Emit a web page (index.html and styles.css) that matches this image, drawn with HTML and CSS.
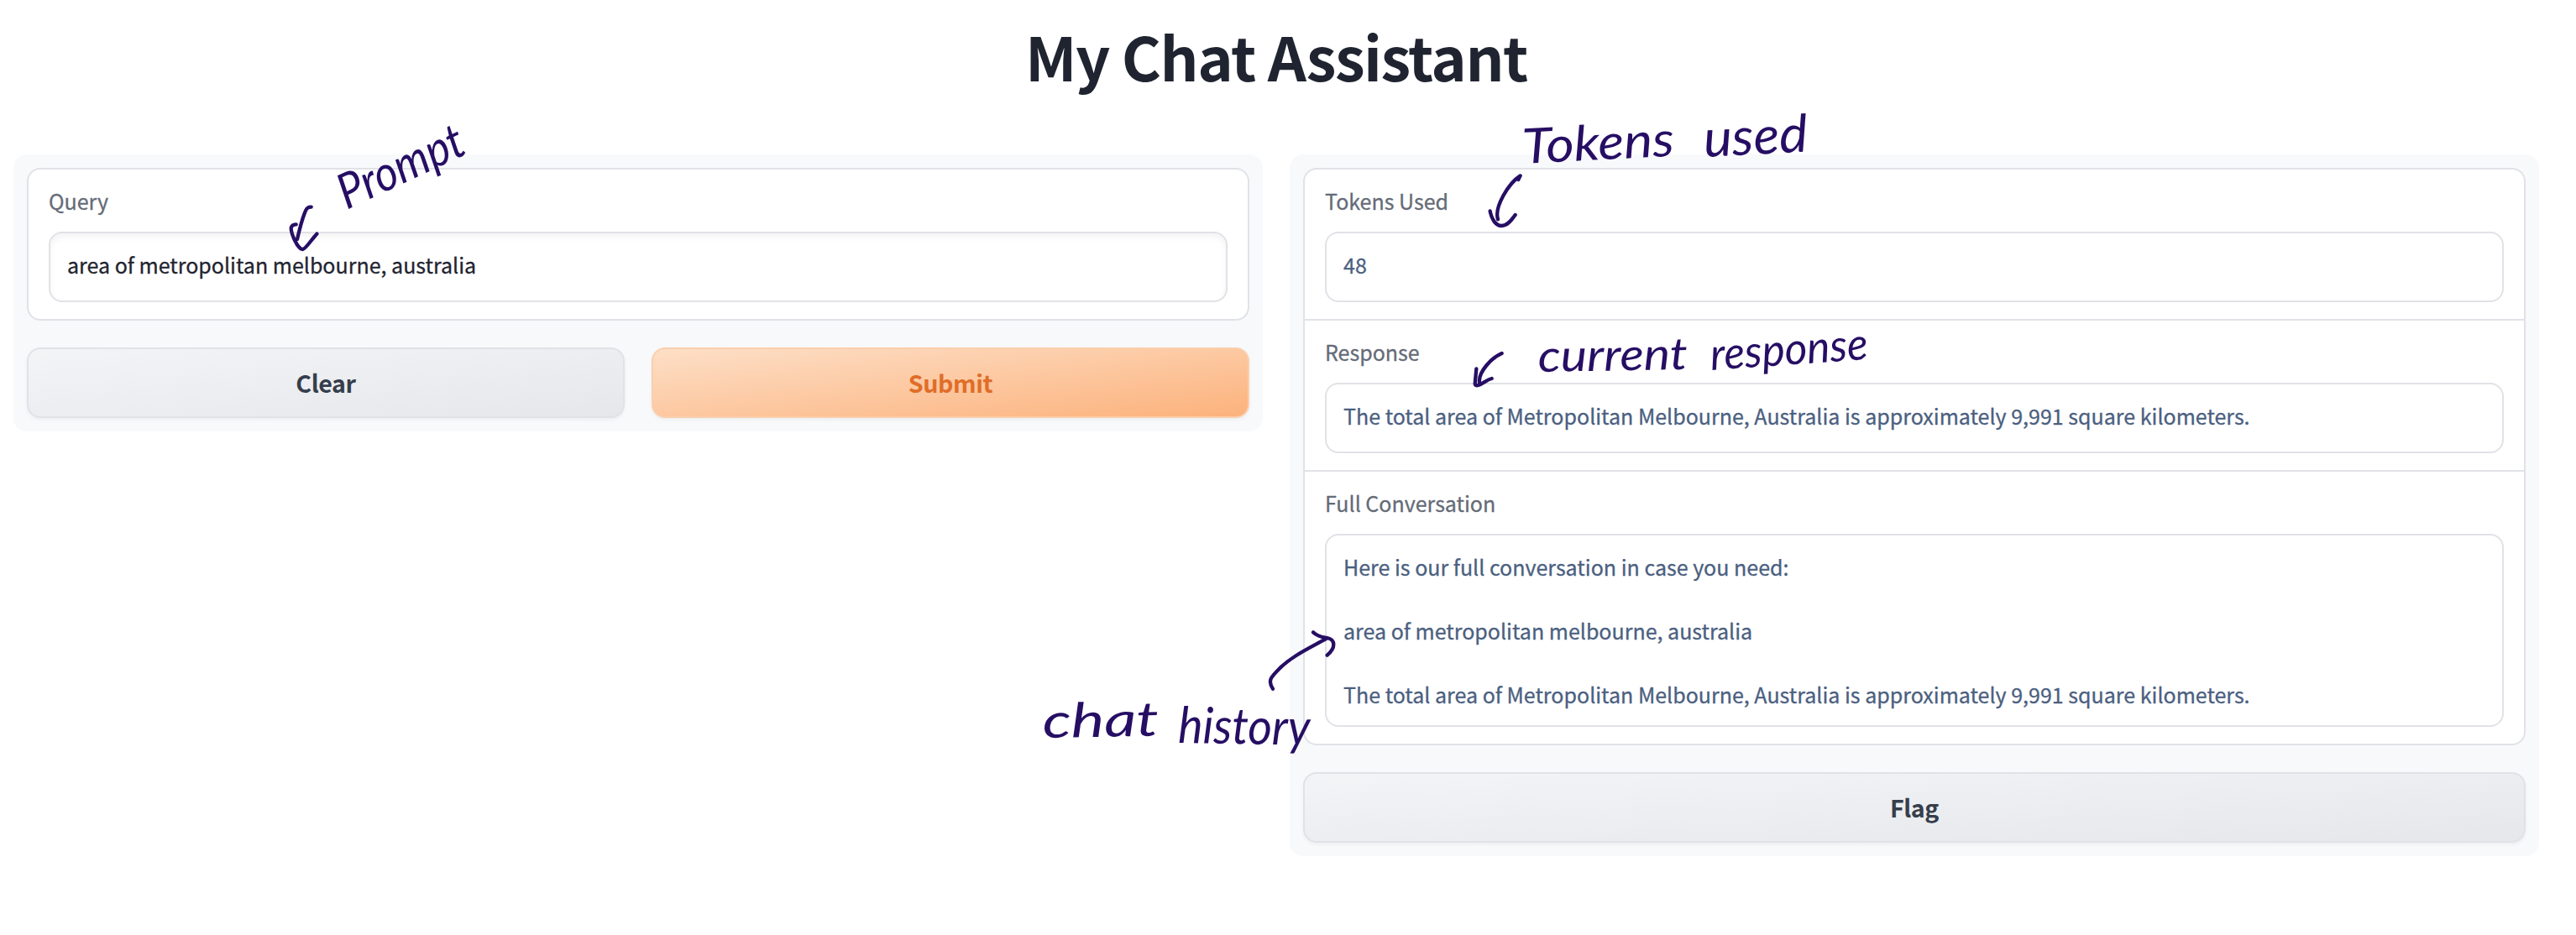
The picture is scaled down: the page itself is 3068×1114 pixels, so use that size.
FILE: index.html
```html
<!DOCTYPE html>
<html lang="en">
<head>
<meta charset="utf-8">
<title>My Chat Assistant</title>
<link rel="stylesheet" href="styles.css">
</head>
<body>
<main class="app">
  <h1 class="title">My Chat Assistant</h1>
  <div class="columns">
    <section class="panel">
      <div class="form">
        <div class="field">
          <span class="label">Query</span>
          <div class="box editable">area of metropolitan melbourne, australia</div>
        </div>
      </div>
      <div class="buttons">
        <button class="button">Clear</button>
        <button class="button primary">Submit</button>
      </div>
    </section>
    <section class="panel">
      <div class="form">
        <div class="field">
          <span class="label">Tokens Used</span>
          <div class="box">48</div>
        </div>
        <div class="field">
          <span class="label">Response</span>
          <div class="box">The total area of Metropolitan Melbourne, Australia is approximately 9,991 square kilometers.</div>
        </div>
        <div class="field">
          <span class="label">Full Conversation</span>
          <div class="box conversation"><p>Here is our full conversation in case you need:</p><p>area of metropolitan melbourne, australia</p><p>The total area of Metropolitan Melbourne, Australia is approximately 9,991 square kilometers.</p></div>
        </div>
      </div>
      <div class="buttons">
        <button class="button">Flag</button>
      </div>
    </section>
  </div>
</main>
<svg class="notes" viewBox="0 0 3068 1114">
  <g class="ink">
    <path transform="translate(330 140) scale(.33333)" d="M122 320Q108 319 102 333C88 365 80 400 72 435M68 382C46 384 48 397 54 417C62 442 79 472 92 471C102 470 124 435 142 416"/>
    <path transform="translate(1740 100) scale(.33333)" d="M205 342L212 328C170 355 118 440 132 484M104 454C108 477 121 507 145 507C169 507 184 481 194 468"/>
    <path transform="translate(1740 380) scale(.33333)" d="M146 123C112 137 61 188 66 228M55 178L50 232Q51 240 62 237C81 230 92 217 110 213"/>
    <path transform="translate(1220 730) scale(.33333)" d="M888 272C868 243 882 229 911 200C957 154 1020 126 1080 92M1032 70C1052 88 1067 87 1082 90C1112 97 1113 125 1082 152"/>
  </g>
  <g class="handwriting">
    <text transform="translate(413 250) rotate(-25)" font-size="58" textLength="160" lengthAdjust="spacingAndGlyphs">Prompt</text>
    <text transform="translate(1814 195) rotate(-3)" font-size="58" textLength="181" lengthAdjust="spacingAndGlyphs">Tokens</text>
    <text transform="translate(2030 187) rotate(-3)" font-size="62" textLength="124" lengthAdjust="spacingAndGlyphs">used</text>
    <text transform="translate(1832 443) rotate(-1)" font-size="53" textLength="178" lengthAdjust="spacingAndGlyphs">current</text>
    <text transform="translate(2038 441) rotate(-4)" font-size="53" textLength="188" lengthAdjust="spacingAndGlyphs">response</text>
    <text transform="translate(1242 879) rotate(-1)" font-size="57" textLength="138" lengthAdjust="spacingAndGlyphs">chat</text>
    <text transform="translate(1403 885) rotate(1)" font-size="60" textLength="157" lengthAdjust="spacingAndGlyphs">history</text>
  </g>
</svg>
</body>
</html>
```
FILE: styles.css
```css
* { box-sizing: border-box; }

body {
  position: relative;
  margin: 0;
  height: 1114px;
  background: #fff;
  color: #1f2430;
  font-family: "Noto Sans CJK SC", "Noto Sans", sans-serif;
  font-size: 25.03px;
  overflow: hidden;
}

.app { width: 3040px; padding: 16px; }

.title {
  margin: 0 0 52px;
  height: 116px;
  font-size: 72px;
  font-weight: 700;
  letter-spacing: -1.45px;
  line-height: 100px;
  text-align: center;
}

.columns {
  display: grid;
  grid-template-columns: 1fr 1fr;
  align-items: start;
  gap: 32px;
}

.panel {
  display: flex;
  flex-direction: column;
  gap: 32px;
  padding: 16px;
  border-radius: 16px;
  background: #f8f9fb;
}

.form {
  border: 2px solid #e1e2e7;
  border-radius: 16px;
  background: #fff;
}

.field { padding: 24px 24px 20px; }
.field + .field { border-top: 2px solid #e1e2e7; }

.label {
  display: block;
  height: 50px;
  line-height: 26px;
  color: #656b77;
  -webkit-text-stroke: .3px;
}

.box {
  height: 84px;
  padding: 18px 20px;
  border: 2px solid #e1e2e7;
  border-radius: 16px;
  line-height: 38px;
  color: #4b6080;
  -webkit-text-stroke: .3px;
}

.editable {
  color: #1f2430;
  box-shadow: inset 0 4px 8px rgba(0, 0, 0, .05);
}

.conversation { height: 230px; }
.conversation p { margin: 0 0 38px; }

.buttons { display: flex; gap: 32px; }

.button {
  flex: 1;
  height: 84px;
  padding: 0 0 2px;
  border: 2px solid #e1e2e6;
  border-radius: 16px;
  background: linear-gradient(to bottom right, #f3f4f6, #e5e7eb);
  box-shadow: 0 2px 4px rgba(0, 0, 0, .05);
  color: #363e4b;
  font: 700 28.6px "Noto Sans CJK SC", "Noto Sans", sans-serif;
  letter-spacing: -.4px;
}

.primary {
  border-color: #fbceab;
  background: linear-gradient(to bottom right, #fddfc7, #fcb27c);
  color: #e06d28;
}

.notes {
  position: absolute;
  top: 0;
  left: 0;
  width: 3068px;
  height: 1114px;
}

.ink {
  fill: none;
  stroke: #260e64;
  stroke-width: 13;
  stroke-linecap: round;
  stroke-linejoin: round;
}

.handwriting {
  fill: #260e64;
  font-family: Lato, sans-serif;
  font-style: italic;
}
```
